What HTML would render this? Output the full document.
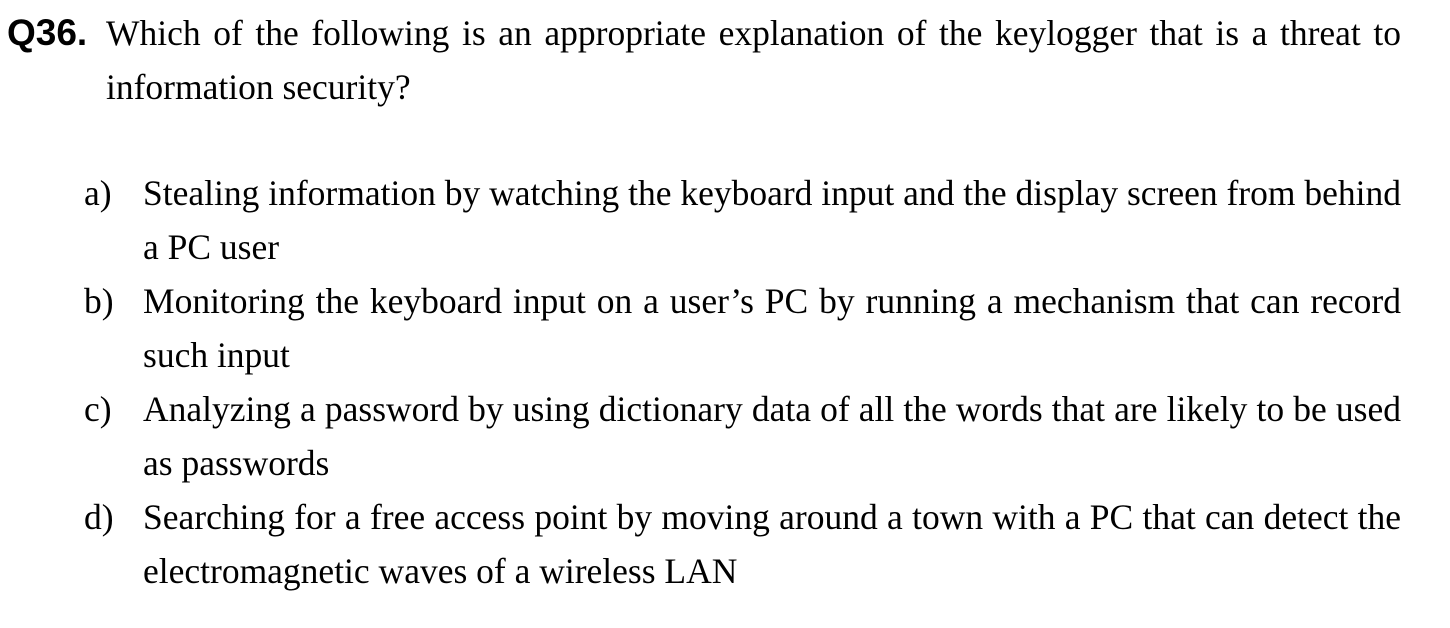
<!DOCTYPE html>
<html><head><meta charset="utf-8"><style>
html,body{margin:0;padding:0;background:#fff;width:1450px;height:628px;overflow:hidden}
body{font-family:"Liberation Serif",serif;font-size:35.5px;line-height:54px;color:#000;position:relative}
.q{position:absolute;left:7px;top:6px;font-family:"Liberation Sans",sans-serif;font-weight:bold;font-size:37px}
.l{position:absolute;white-space:nowrap}
.j{text-align:justify;text-align-last:justify;white-space:normal;word-spacing:-6px}
.lab{position:absolute;left:84px}
</style></head><body>
<div class="q">Q36.</div>
<div class="l j" style="left:106px;top:6px;width:1295px">Which of the following is an appropriate explanation of the keylogger that is a threat to</div>
<div class="l" style="left:106px;top:60px">information security?</div>
<div class="lab" style="top:166px">a)</div>
<div class="l j" style="left:143px;top:166px;width:1258px">Stealing information by watching the keyboard input and the display screen from behind</div>
<div class="l" style="left:143px;top:220px">a PC user</div>
<div class="lab" style="top:274px">b)</div>
<div class="l j" style="left:143px;top:274px;width:1258px">Monitoring the keyboard input on a user’s PC by running a mechanism that can record</div>
<div class="l" style="left:143px;top:328px">such input</div>
<div class="lab" style="top:382px">c)</div>
<div class="l j" style="left:143px;top:382px;width:1258px">Analyzing a password by using dictionary data of all the words that are likely to be used</div>
<div class="l" style="left:143px;top:436px">as passwords</div>
<div class="lab" style="top:490px">d)</div>
<div class="l j" style="left:143px;top:490px;width:1258px">Searching for a free access point by moving around a town with a PC that can detect the</div>
<div class="l" style="left:143px;top:544px">electromagnetic waves of a wireless LAN</div>
</body></html>
